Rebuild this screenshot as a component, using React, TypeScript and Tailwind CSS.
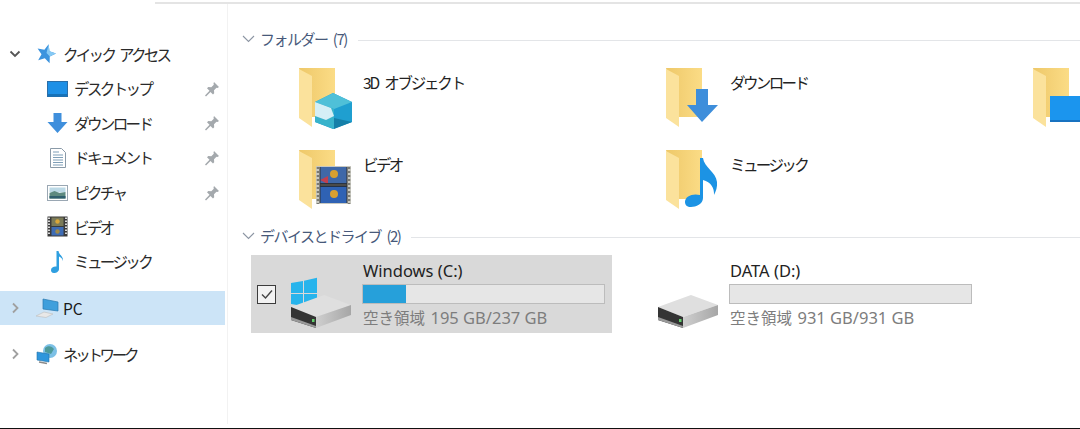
import React from "react";

const jp = "font-['Noto_Sans_CJK_JP','Noto_Sans',sans-serif]";

function Chevron({ open, cls = "" }: { open?: boolean; cls?: string }) {
  return (
    <svg width="12" height="12" viewBox="0 0 12 12" className={cls} fill="none" strokeWidth="1.8">
      {open ? <path d="M1.5 3.5 6 8l4.5-4.5" stroke="#555" /> : <path d="M4 1.5 8.5 6 4 10.5" stroke="#a0a0a0" />}
    </svg>
  );
}

function Pin() {
  return (
    <svg width="16" height="16" viewBox="0 0 16 16">
      <path d="M10 1l5 5-1.500 1-1-.3-2.500 2.500.2 3-1.200 1.300-2.500-2.500L2 15.500l-1-1 4.500-4.800L3 7.200 4.300 6l3 .2L9.800 3.700 9.500 2.500z" fill="#a4a9ad" />
    </svg>
  );
}

function Star() {
  return (
    <svg width="22" height="22" viewBox="0 0 22 22">
      <path d="M12.600 1.300 13.500 8.200 20 10.500 13.800 13.500 13.600 20.300 8.800 15.300 2.200 17.300 5.500 11.200 1.600 5.600 8.400 6.800z" fill="#3b93de" />
      <path d="M12.600 1.300 13.500 8.200 20 10.500 13.800 13.500 10.500 10z" fill="#86c9f4" />
    </svg>
  );
}

function SmallIcon({ kind }: { kind: string }) {
  if (kind === "desktop")
    return (
      <svg width="22" height="18" viewBox="0 0 22 18">
        <rect x="0.500" y="1.500" width="20" height="15" fill="#1e90e6" stroke="#2a6ea8" />
        <rect x="1" y="14" width="19" height="2.500" fill="#1672b8" />
      </svg>
    );
  if (kind === "down")
    return (
      <svg width="22" height="22" viewBox="0 0 22 22">
        <path d="M6.500 1h8v9h6L10.500 21 .5 10h6z" fill="#3f8fdc" />
      </svg>
    );
  if (kind === "doc")
    return (
      <svg width="22" height="22" viewBox="0 0 22 22">
        <path d="M3.500 1.500h11l4 4v15h-15z" fill="#fff" stroke="#8a9aa8" />
        <path d="M6 5h6M6 8h10M6 10.500h10M6 13h10M6 15.500h10M6 18h10" stroke="#7f9fb8" />
      </svg>
    );
  if (kind === "pic")
    return (
      <svg width="22" height="18" viewBox="0 0 22 18">
        <rect x="0.500" y="1.500" width="20" height="15" fill="#fff" stroke="#9aa7b3" />
        <rect x="2.500" y="3.500" width="16" height="5" fill="#bcd9e6" />
        <path d="M2.500 9l5-2 5 2 6-1v6.500h-16z" fill="#5d8a80" />
        <rect x="2.500" y="12" width="16" height="2.500" fill="#2f5f6e" />
      </svg>
    );
  if (kind === "film")
    return (
      <svg width="22" height="22" viewBox="0 0 22 22">
        <rect x="0.500" y="0.500" width="20" height="20" fill="#3a3a3a" />
        <rect x="4.500" y="1.500" width="12" height="8.500" fill="#7a7a58" />
        <rect x="4.500" y="11" width="12" height="8.500" fill="#3e6cb5" />
        <circle cx="10.500" cy="5.500" r="2.200" fill="#d9a63a" />
        <circle cx="10.500" cy="15.500" r="2.200" fill="#a08a4a" />
        <path d="M2 1.500v18M19 1.500v18" stroke="#d8d8d8" strokeWidth="2" strokeDasharray="1.500 1.500" />
      </svg>
    );
  return (
    <svg width="22" height="24" viewBox="0 0 22 24">
      <path d="M9.500 1h2c.5 4 5 5 4.500 10-.5-2-2-4-4-4.500V19c0 2.500-2.500 4-5 4s-3-1.500-3-3c0-2.500 3-4 5.500-3.500z" fill="#2f9fe0" />
    </svg>
  );
}

const narrow = "text-[15.5px] tracking-[-2.600px]";

function NavChild({ icon, label, pinned }: { icon: string; label: string; pinned?: boolean }) {
  return (
    <div className="h-[34.6px] flex items-center pl-[47px] pr-[5px]">
      <div className="w-[27px] flex items-center">
        <SmallIcon kind={icon} />
      </div>
      <span className={`${narrow} text-[#2a2a2a] flex-1`}>{label}</span>
      {pinned && <Pin />}
    </div>
  );
}

function Sidebar() {
  return (
    <aside className="w-[228px] shrink-0 mb-[4px] border-r border-[#f2f2f2] pt-[33px] pr-[2px]">
      <div className="h-[34.6px] flex items-center pl-[9px]">
        <Chevron open />
        <div className="ml-[15px] w-[27px]">
          <Star />
        </div>
        <span className="text-[15.5px] tracking-[-2.700px] [word-spacing:4px] text-[#2a2a2a]">クイック アクセス</span>
      </div>
      <NavChild icon="desktop" label="デスクトップ" pinned />
      <NavChild icon="down" label="ダウンロード" pinned />
      <NavChild icon="doc" label="ドキュメント" pinned />
      <NavChild icon="pic" label="ピクチャ" pinned />
      <NavChild icon="film" label="ビデオ" />
      <NavChild icon="note" label="ミュージック" />
      <div className="mt-[12px] h-[34px] flex items-center pl-[9px] bg-[#cce4f7]">
        <Chevron />
        <div className="ml-[15px] w-[27px]">
          <svg width="24" height="22" viewBox="0 0 24 22">
            <path d="M7 2l15 3v9L7 12z" fill="#3f9fdc" stroke="#2a7ab0" strokeWidth=".7" />
            <path d="M0 19l8-4 9 2-7 3.500z" fill="#e8e8e8" stroke="#bdbdbd" strokeWidth=".6" />
          </svg>
        </div>
        <span className="text-[15.5px] text-[#1a1a1a]">PC</span>
      </div>
      <div className="mt-[12px] h-[34px] flex items-center pl-[9px]">
        <Chevron />
        <div className="ml-[15px] w-[27px]">
          <svg width="24" height="22" viewBox="0 0 24 22">
            <circle cx="14" cy="8" r="7" fill="#7cc0e6" />
            <path d="M9 5c3-3 7-2 9 1l-3 5-6-2z" fill="#4d9a9a" />
            <path d="M1 9l12 2v8L1 17z" fill="#2f96dc" stroke="#2172aa" strokeWidth=".6" />
            <path d="M3 19l8 1.500" stroke="#8a8a8a" strokeWidth="1.500" />
          </svg>
        </div>
        <span className="text-[15.5px] tracking-[-3.300px] text-[#2a2a2a]">ネットワーク</span>
      </div>
    </aside>
  );
}

function GroupHeader({ label }: { label: string }) {
  return (
    <div className="h-[18px] flex items-center pl-[14px]">
      <svg width="13" height="8" viewBox="0 0 13 8" fill="none">
        <path d="M1 1l5.500 5.500L12 1" stroke="#8c95a3" strokeWidth="1.100" />
      </svg>
      <span className="ml-[5px] text-[15px] tracking-[-1.500px] [word-spacing:3.500px] text-[#47597a] whitespace-nowrap">{label}</span>
      <div className="ml-[11px] flex-1 h-px mt-[2px] bg-[#e3e5e8]" />
    </div>
  );
}

function FolderIcon({ overlay }: { overlay: string }) {
  return (
    <svg width="60" height="60" viewBox="0 0 60 60" className="shrink-0 overflow-visible">
      <defs>
        <linearGradient id="fb" x1="0" y1="0" x2="1" y2="0">
          <stop offset="0" stopColor="#eec869" />
          <stop offset="1" stopColor="#fbdc86" />
        </linearGradient>
      </defs>
      <path d="M1 0h36v49H14z" fill="url(#fb)" />
      <path d="M1 1l13 7v51L1 50z" fill="#fbe29c" />
      {overlay === "cube" && (
        <g>
          <path d="M17 34l18-9 19 9v20l-19 7-18-7z" fill="#1f9fd0" />
          <path d="M17 34l18-9 19 9-18 7z" fill="#4fc0d8" />
          <path d="M17 34l19 7v20l-19-7z" fill="#38b3cb" />
          <path d="M17 34l16 6 3 8-8 4-11-4z" fill="#d5eff6" />
          <path d="M36 50l18 4-18 7z" fill="#157fa8" />
        </g>
      )}
      {overlay === "down" && <path d="M31 21h12v16h10L37 54 22 37h9z" fill="#3e8edb" />}
      {overlay === "desk" && (
        <g>
          <rect x="18" y="28" width="46" height="26" fill="#1b95ee" />
          <rect x="18" y="52" width="46" height="2" fill="#1872c0" />
        </g>
      )}
      {overlay === "film" && (
        <g>
          <rect x="18" y="16" width="35" height="38" fill="#c8c8c0" />
          <rect x="22" y="17" width="27" height="17" fill="#3f68a8" />
          <rect x="22" y="36" width="27" height="17" fill="#2f62b4" />
          <circle cx="36" cy="24" r="4" fill="#d9a030" />
          <circle cx="36" cy="44" r="4" fill="#d9a030" />
          <path d="M22 30l8-4 0 8z" fill="#c04050" />
          <path d="M22 34h27M22 36h27" stroke="#222" strokeWidth="1.500" />
          <path d="M22 17v36M49 17v36" stroke="#333" strokeWidth="1" />
          <path d="M20 17v37M51 17v37" stroke="#7a7a72" strokeWidth="2.500" strokeDasharray="2 2" />
        </g>
      )}
      {overlay === "note" && (
        <path
          d="M35 8h3c1 9 13 14 14 24 .5 5-1 9-3 13 .5-7-3-13-11-15v18c0 6-7 9-12 9-4 0-6-2-6-5 0-6 8-9 15-7z"
          fill="#1c93e4"
        />
      )}
    </svg>
  );
}

function FolderItem({ name, overlay, track }: { name: string; overlay: string; track: string }) {
  return (
    <div className="h-[59px] flex overflow-visible">
      <FolderIcon overlay={overlay} />
      <span className={`ml-[5px] mt-[2px] text-[15.5px] leading-[24px] text-[#222] whitespace-nowrap ${track}`}>{name}</span>
    </div>
  );
}

function Drive({
  name,
  free,
  pct,
  selected,
}: {
  name: string;
  free: string;
  pct: number;
  selected?: boolean;
}) {
  return (
    <div className={`w-[361px] h-[78px] flex ${selected ? "bg-[#d9d9d9]" : ""}`}>
      <div className="w-[40px] flex items-center justify-center">
        {selected && (
          <div className="ml-[-9px] w-[19px] h-[19px] border border-[#3c3c3c] bg-[#f2f2f2] flex items-center justify-center">
            <svg width="14" height="14" viewBox="0 0 14 14" fill="none">
              <path d="M2 7.500l3.500 3.500L12 3.500" stroke="#444" strokeWidth="1.400" />
            </svg>
          </div>
        )}
      </div>
      <svg width="62" height="78" viewBox="0 0 62 78" className="shrink-0">
        <defs>
          <linearGradient id="ds" x1="0" y1="0" x2="1" y2="0">
            <stop offset="0" stopColor="#cfcfcf" />
            <stop offset="1" stopColor="#a6a6a6" />
          </linearGradient>
        </defs>
        {selected && (
          <g fill="#27b4ec">
            <path d="M0 28l12-2v12H0z" />
            <path d="M13 25.800l13-3V38H13z" />
            <path d="M0 39h12v12l-12-2z" />
            <path d="M13 39h13v15l-13-2.500z" />
          </g>
        )}
        <path d="M0 52l33-12 27 10-35 12z" fill="#dfdfdf" />
        <path d="M25 62l35-12v10L25 73z" fill="url(#ds)" />
        <path d="M0 52l25 10v11L0 65z" fill="#343434" />
        <path d="M0 62l25 9v2L0 65z" fill="#9a9a9a" />
        <rect x="21" y="64" width="2.500" height="3" fill="#62d06c" />
      </svg>
      <div className="ml-[9px] w-[243px] flex flex-col">
        <div className="h-[29px] pt-[3px] ml-[1px] text-[16.5px] leading-[26px] font-['Noto_Sans',sans-serif] text-[#222] whitespace-nowrap">{name}</div>
        <div className="h-[20px] bg-[#e6e6e6] border border-[#bcbcbc]">
          <div className="h-full bg-[#26a0da]" style={{ width: `${pct}%` }} />
        </div>
        <div className="ml-[1px] text-[15.5px] leading-[26px] text-[#7d7d7d] whitespace-nowrap">
          空き領域 <span className="ml-[2px] text-[16.5px] font-['Noto_Sans',sans-serif]">{free}</span>
        </div>
      </div>
    </div>
  );
}

export default function App() {
  return (
    <div className={`w-[1080px] h-[429px] bg-white overflow-hidden flex flex-col ${jp}`}>
      <div className="h-[4px] shrink-0 flex justify-end">
        <div className="w-[925px] h-[4px] pt-[2px]">
          <div className="h-[2px] bg-[#e4e4e4]" />
        </div>
      </div>
      <div className="flex-1 flex min-h-0">
        <Sidebar />
        <main className="flex-1 min-w-0 pt-[26px]">
          <GroupHeader label="フォルダー (7)" />
          <div className="mt-[20px] pl-[70px] grid grid-cols-[367px_367px_367px] gap-y-[23px] w-[1171px]">
            <FolderItem name="3D オブジェクト" overlay="cube" track="tracking-[-2.200px] [word-spacing:5px]" />
            <FolderItem name="ダウンロード" overlay="down" track="tracking-[-2.600px]" />
            <FolderItem name="" overlay="desk" track="" />
            <FolderItem name="ビデオ" overlay="film" track="tracking-[-2.600px]" />
            <FolderItem name="ミュージック" overlay="note" track="tracking-[-2.600px]" />
          </div>
          <div className="mt-[18px]">
            <GroupHeader label="デバイスとドライブ (2)" />
          </div>
          <div className="mt-[10px] pl-[23px] flex gap-[6px]">
            <Drive name="Windows (C:)" free="195 GB/237 GB" pct={17.7} selected />
            <Drive name="DATA (D:)" free="931 GB/931 GB" pct={0} />
          </div>
        </main>
      </div>
      <div className="h-px shrink-0 bg-[#111]" />
    </div>
  );
}
